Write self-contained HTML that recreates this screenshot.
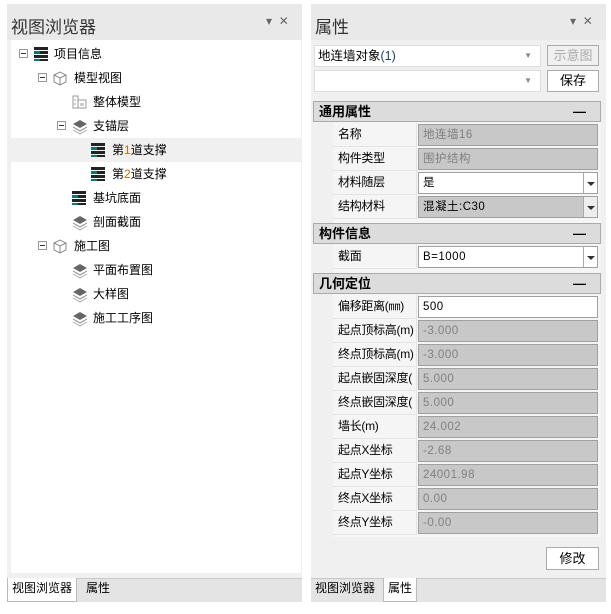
<!DOCTYPE html>
<html><head><meta charset="utf-8"><style>
*{margin:0;padding:0;box-sizing:border-box}
body{width:611px;height:614px;background:#fff;font-family:"Liberation Sans","Noto Sans CJK SC",sans-serif;font-size:12px;color:#000;position:relative;overflow:hidden}
.a{position:absolute}
.hdr{background:#e9e9e9;font-size:17px;color:#333;padding:9px 0 0 4px}
.ctl{font-size:12px;color:#666}
.row{position:absolute;height:24px;line-height:24px;white-space:nowrap}
.exp{position:absolute;width:9px;height:9px;border:1px solid #999;background:#fff}
.exp:after{content:"";position:absolute;left:1px;top:3px;width:5px;height:1px;background:#333}
.ic{position:absolute}
.sec{position:absolute;left:313px;width:288px;height:21px;background:#dcdcdc;border:1px solid #aaa;font-weight:bold;line-height:19px;padding-left:5px;font-size:13px}
.sec b{position:absolute;right:14px;top:0}
.lbl{position:absolute;left:333px;width:84px;height:24px;line-height:23px;padding-left:5px;background:#f5f5f5;border-bottom:1px solid #e4e4e4;border-right:1px solid #e4e4e4;font-size:12px;white-space:nowrap;overflow:hidden;letter-spacing:-0.3px}
.val{position:absolute;left:418px;width:180px;height:22px;border:1px solid #a0a0a0;background:#c8c8c8;line-height:20px;padding-left:4px;color:#808080;font-family:"Liberation Sans","Noto Sans CJK SC",sans-serif;font-size:11.5px;letter-spacing:0.5px}
.val.w{background:#fff;color:#000}
.dd{position:absolute;right:0;top:0;width:14px;height:20px;border-left:1px solid #aaa;background:#fff}
.dd:after{content:"";position:absolute;left:3px;top:9px;border:4px solid transparent;border-top:4px solid #333}
.btn{position:absolute;border:1px solid #aaa;background:#fff;text-align:center;font-size:13px}
.tab{position:absolute;height:22px;line-height:20px;font-size:12px;padding:0 4px}
</style></head><body>
<div class="a" style="left:7px;top:4px;width:295px;height:598px;background:#f0f0f0"></div>
<div class="a hdr" style="left:7px;top:4px;width:295px;height:36px">视图浏览器</div>
<div class="a ctl" style="left:266px;top:14px">▾ &nbsp;✕</div>
<div class="a" style="left:11px;top:40px;width:290px;height:533px;background:#fff"></div>
<div class="a" style="left:11px;top:138px;width:290px;height:24px;background:#f0f0f0"></div>

<svg class="a" width="0" height="0"><defs>
<g id="bar"><rect x="0" y="0" width="14" height="3" fill="#222"/><rect x="0" y="4" width="6" height="3" fill="#087a70"/><rect x="6" y="4" width="8" height="3" fill="#222"/><rect x="0" y="8" width="14" height="3" fill="#222"/><rect x="0" y="12" width="6" height="2" fill="#087a70"/><rect x="6" y="12" width="8" height="2" fill="#222"/></g>
<g id="lay"><path d="M1 6 L8 2 L15 6 L8 10 Z" fill="#666"/><path d="M1 9 L8 13 L15 9" fill="none" stroke="#888"/><path d="M1 12 L8 16 L15 12" fill="none" stroke="#aaa"/></g>
<g id="cube"><path d="M2 5 L8 2 L14 5 L14 12 L8 15 L2 12 Z M2 5 L8 8 L14 5 M8 8 L8 15" fill="#fff" stroke="#888"/></g>
</defs></svg>

<div class="exp" style="left:19px;top:49px"></div>
<svg class="ic" style="left:34px;top:47px" width="16" height="16"><use href="#bar"/></svg>
<div class="row" style="left:54px;top:42px">项目信息</div>

<div class="exp" style="left:38px;top:73px"></div>
<svg class="ic" style="left:52px;top:70px" width="16" height="17"><use href="#cube"/></svg>
<div class="row" style="left:74px;top:66px">模型视图</div>

<svg class="ic" style="left:72px;top:94px" width="16" height="16"><path d="M1 2h5v12H1zM6 6h8v8H6zM3 5v2M3 9v2M9 9v3M11 9v3" fill="#fff" stroke="#999"/></svg>
<div class="row" style="left:93px;top:90px">整体模型</div>

<div class="exp" style="left:57px;top:121px"></div>
<svg class="ic" style="left:72px;top:118px" width="16" height="17"><use href="#lay"/></svg>
<div class="row" style="left:93px;top:114px">支锚层</div>

<svg class="ic" style="left:91px;top:143px" width="16" height="16"><use href="#bar"/></svg>
<div class="row" style="left:112px;top:138px">第<span style="color:#c07000">1</span>道支撑</div>
<svg class="ic" style="left:91px;top:167px" width="16" height="16"><use href="#bar"/></svg>
<div class="row" style="left:112px;top:162px">第<span style="color:#c07000">2</span>道支撑</div>

<svg class="ic" style="left:72px;top:191px" width="16" height="16"><use href="#bar"/></svg>
<div class="row" style="left:93px;top:186px">基坑底面</div>
<svg class="ic" style="left:72px;top:214px" width="16" height="17"><use href="#lay"/></svg>
<div class="row" style="left:93px;top:210px">剖面截面</div>

<div class="exp" style="left:38px;top:241px"></div>
<svg class="ic" style="left:52px;top:238px" width="16" height="17"><use href="#cube"/></svg>
<div class="row" style="left:74px;top:234px">施工图</div>

<svg class="ic" style="left:72px;top:262px" width="16" height="17"><use href="#lay"/></svg>
<div class="row" style="left:93px;top:258px">平面布置图</div>
<svg class="ic" style="left:72px;top:286px" width="16" height="17"><use href="#lay"/></svg>
<div class="row" style="left:93px;top:282px">大样图</div>
<svg class="ic" style="left:72px;top:310px" width="16" height="17"><use href="#lay"/></svg>
<div class="row" style="left:93px;top:306px">施工工序图</div>

<div class="a" style="left:7px;top:578px;width:295px;height:24px;background:#e4e4e4;border-top:1px solid #c8c8c8"></div>
<div class="tab" style="left:7px;top:578px;background:#fff;border:1px solid #bbb;border-top:none;height:24px">视图浏览器</div>
<div class="tab" style="left:82px;top:578px">属性</div>

<div class="a" style="left:311px;top:4px;width:295px;height:598px;background:#f0f0f0"></div>
<div class="a hdr" style="left:311px;top:4px;width:295px;height:36px">属性</div>
<div class="a ctl" style="left:570px;top:14px">▾ &nbsp;✕</div>

<div class="a" style="left:314px;top:45px;width:227px;height:22px;background:#fff;border:1px solid #ddd;line-height:20px;padding-left:3px;font-size:12.5px">地连墙对象<span style="color:#1a3c8c">(1)</span><span style="position:absolute;right:8px;color:#888;font-size:8px">▼</span></div>
<div class="btn" style="left:547px;top:45px;width:52px;height:21px;color:#aaa;background:#f0f0f0;line-height:19px">示意图</div>
<div class="a" style="left:314px;top:70px;width:227px;height:22px;background:#fff;border:1px solid #ddd"><span style="position:absolute;right:8px;top:5px;color:#888;font-size:8px">▼</span></div>
<div class="btn" style="left:547px;top:70px;width:52px;height:22px;line-height:20px">保存</div>

<div class="a" style="left:313px;top:101px;width:288px;height:436px;background:#f5f5f5"></div>
<div class="a" style="left:313px;top:101px;width:20px;height:436px;background:#f0f0f0"></div>

<div class="sec" style="top:101px">通用属性<b>—</b></div>
<div class="lbl" style="top:123px">名称</div><div class="val" style="top:124px">地连墙16</div>
<div class="lbl" style="top:147px">构件类型</div><div class="val" style="top:148px">围护结构</div>
<div class="lbl" style="top:171px">材料随层</div><div class="val w" style="top:172px">是<div class="dd"></div></div>
<div class="lbl" style="top:195px">结构材料</div><div class="val" style="top:196px;color:#000">混凝土:C30<div class="dd" style="background:#eee"></div></div>

<div class="sec" style="top:223px">构件信息<b>—</b></div>
<div class="lbl" style="top:245px">截面</div><div class="val w" style="top:246px">B=1000<div class="dd"></div></div>

<div class="sec" style="top:273px">几何定位<b>—</b></div>
<div class="lbl" style="top:295px">偏移距离(㎜)</div><div class="val w" style="top:296px">500</div>
<div class="lbl" style="top:319px">起点顶标高(m)</div><div class="val" style="top:320px">-3.000</div>
<div class="lbl" style="top:343px">终点顶标高(m)</div><div class="val" style="top:344px">-3.000</div>
<div class="lbl" style="top:367px">起点嵌固深度(</div><div class="val" style="top:368px">5.000</div>
<div class="lbl" style="top:391px">终点嵌固深度(</div><div class="val" style="top:392px">5.000</div>
<div class="lbl" style="top:415px">墙长(m)</div><div class="val" style="top:416px">24.002</div>
<div class="lbl" style="top:439px">起点X坐标</div><div class="val" style="top:440px">-2.68</div>
<div class="lbl" style="top:463px">起点Y坐标</div><div class="val" style="top:464px">24001.98</div>
<div class="lbl" style="top:487px">终点X坐标</div><div class="val" style="top:488px">0.00</div>
<div class="lbl" style="top:511px">终点Y坐标</div><div class="val" style="top:512px">-0.00</div>
<div class="a" style="left:313px;top:537px;width:288px;height:40px;background:#f0f0f0"></div>

<div class="btn" style="left:546px;top:547px;width:53px;height:23px;line-height:21px">修改</div>

<div class="a" style="left:311px;top:578px;width:295px;height:24px;background:#e4e4e4;border-top:1px solid #c8c8c8"></div>
<div class="tab" style="left:311px;top:578px">视图浏览器</div>
<div class="tab" style="left:383px;top:578px;background:#fff;border:1px solid #bbb;border-top:none;height:24px">属性</div>
</body></html>
